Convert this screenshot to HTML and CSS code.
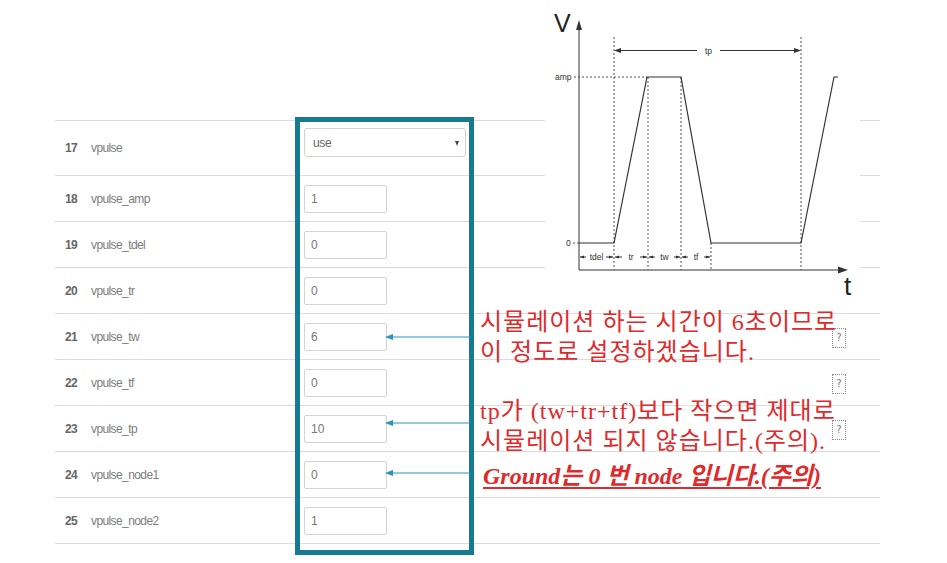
FILE: index.html
```html
<!DOCTYPE html>
<html lang="ko">
<head>
<meta charset="utf-8">
<title>vpulse settings</title>
<link rel="stylesheet" href="styles.css">
</head>
<body>
<div class="page">
  <div class="table">
    <div class="row row-first">
      <span class="num">17</span><span class="label">vpulse</span>
      <div class="val val-top"><div class="select">use<span class="caret"></span></div></div>
      <div class="help"></div>
    </div>
    <div class="row">
      <span class="num">18</span><span class="label">vpulse_amp</span>
      <div class="val"><div class="input">1</div></div>
      <div class="help"></div>
    </div>
    <div class="row">
      <span class="num">19</span><span class="label">vpulse_tdel</span>
      <div class="val"><div class="input">0</div></div>
      <div class="help"></div>
    </div>
    <div class="row">
      <span class="num">20</span><span class="label">vpulse_tr</span>
      <div class="val"><div class="input">0</div></div>
      <div class="help"></div>
    </div>
    <div class="row">
      <span class="num">21</span><span class="label">vpulse_tw</span>
      <div class="val"><div class="input">6</div></div>
      <div class="help"><span class="q">?</span></div>
    </div>
    <div class="row">
      <span class="num">22</span><span class="label">vpulse_tf</span>
      <div class="val"><div class="input">0</div></div>
      <div class="help"><span class="q">?</span></div>
    </div>
    <div class="row">
      <span class="num">23</span><span class="label">vpulse_tp</span>
      <div class="val"><div class="input">10</div></div>
      <div class="help"><span class="q">?</span></div>
    </div>
    <div class="row">
      <span class="num">24</span><span class="label">vpulse_node1</span>
      <div class="val"><div class="input">0</div></div>
      <div class="help"></div>
    </div>
    <div class="row row-last">
      <span class="num">25</span><span class="label">vpulse_node2</span>
      <div class="val"><div class="input">1</div></div>
      <div class="help"></div>
    </div>
  </div>

  <div class="highlight"></div>

  <svg class="diagram" viewBox="545 0 315 304" width="315" height="304">
    <rect x="545" y="0" width="315" height="304" fill="#fff"/>
    <text x="554" y="32" class="big">V</text>
    <line x1="579" y1="28" x2="579" y2="270" class="axis"/>
    <polygon points="579,20 576,30 582,30" fill="#333"/>
    <line x1="579" y1="270" x2="840" y2="270" class="axis"/>
    <polygon points="848,270 838,266.5 838,273.5" fill="#333"/>
    <text x="844" y="295" class="big t">t</text>

    <g class="dots">
      <line x1="574" y1="77" x2="647" y2="77"/>
      <line x1="573" y1="243" x2="579" y2="243"/>
      <line x1="614" y1="37" x2="614" y2="270"/>
      <line x1="648" y1="77" x2="648" y2="270"/>
      <line x1="681" y1="77" x2="681" y2="270"/>
      <line x1="711" y1="243" x2="711" y2="270"/>
      <line x1="801" y1="37" x2="801" y2="270"/>
    </g>
    <polyline points="579,243 614,243 647,77 681,77 711,243 801,243 834,77 838,77" class="pulse"/>

    <text x="555" y="80" class="small">amp</text>
    <text x="566" y="246" class="small">0</text>

    <line x1="617" y1="50.5" x2="697" y2="50.5" class="axis"/>
    <line x1="720" y1="50.5" x2="798" y2="50.5" class="axis"/>
    <polygon points="614,50.5 621,48 621,53" fill="#333"/>
    <polygon points="801,50.5 794,48 794,53" fill="#333"/>
    <text x="708.5" y="54" class="small mid">tp</text>

    <g class="seg">
      <line x1="580" y1="257" x2="586" y2="257"/>
      <line x1="606" y1="257" x2="613" y2="257"/>
      <line x1="615" y1="257" x2="622" y2="257"/>
      <line x1="640" y1="257" x2="647" y2="257"/>
      <line x1="649" y1="257" x2="655" y2="257"/>
      <line x1="674" y1="257" x2="680" y2="257"/>
      <line x1="682" y1="257" x2="688" y2="257"/>
      <line x1="704" y1="257" x2="710" y2="257"/>
    </g>
    <g fill="#333">
      <polygon points="580,257 584,255.5 584,258.5"/>
      <polygon points="613,257 609,255.5 609,258.5"/>
      <polygon points="615,257 619,255.5 619,258.5"/>
      <polygon points="647,257 643,255.5 643,258.5"/>
      <polygon points="649,257 653,255.5 653,258.5"/>
      <polygon points="680,257 676,255.5 676,258.5"/>
      <polygon points="682,257 686,255.5 686,258.5"/>
      <polygon points="710,257 706,255.5 706,258.5"/>
    </g>
    <text x="596.5" y="260" class="small mid">tdel</text>
    <text x="631" y="260" class="small mid">tr</text>
    <text x="664.5" y="260" class="small mid">tw</text>
    <text x="696" y="260" class="small mid">tf</text>
  </svg>

  <svg class="arrows" viewBox="380 320 95 170" width="95" height="170">
    <g class="arrow-line">
      <line x1="392" y1="337" x2="471" y2="337"/>
      <line x1="392" y1="423" x2="471" y2="423"/>
      <line x1="392" y1="473" x2="471" y2="473"/>
    </g>
    <g fill="#2795b5">
      <polygon points="385,337 393,334 393,340"/>
      <polygon points="385,423 393,420 393,426"/>
      <polygon points="385,473 393,470 393,476"/>
    </g>
  </svg>

  <div class="note note-1">
    <p>시뮬레이션 하는 시간이 6초이므로</p>
    <p>이 정도로 설정하겠습니다.</p>
  </div>
  <div class="note note-2">
    <p>tp가 (tw+tr+tf)보다 작으면 제대로</p>
    <p>시뮬레이션 되지 않습니다.(주의).</p>
  </div>
  <div class="note note-3">
    <p>Ground는 0 번 node 입니다.(주의)</p>
  </div>
</div>
</body>
</html>
```

FILE: styles.css
```css
* { box-sizing: border-box; }

html, body {
  margin: 0;
  padding: 0;
  background: #fff;
}

.page {
  position: relative;
  width: 947px;
  height: 563px;
  overflow: hidden;
  padding: 120px 0 0 55px;
  font-family: "Liberation Sans", Arial, sans-serif;
}

.table {
  width: 825px;
  display: flex;
  flex-direction: column;
}

.row {
  display: grid;
  grid-template-columns: 36px 213px 528px 48px;
  align-items: center;
  height: 46px;
  border-top: 1px solid #dcdcdc;
}

.row-first {
  height: 55px;
}

.row-last {
  border-bottom: 1px solid #dcdcdc;
  height: 47px;
}

.num {
  padding-left: 10px;
  font-size: 12px;
  font-weight: bold;
  color: #666;
  letter-spacing: -0.6px;
}

.label {
  font-size: 12px;
  color: #7d7d7d;
  letter-spacing: -0.6px;
}

.val {
  display: flex;
  align-items: center;
}

.val-top {
  align-self: start;
  padding-top: 7px;
}

.select {
  position: relative;
  width: 162px;
  height: 29px;
  border: 1px solid #d2d2d2;
  border-radius: 3px;
  padding-left: 8px;
  display: flex;
  align-items: center;
  font-size: 12px;
  color: #666;
  letter-spacing: -0.3px;
}

.caret {
  position: absolute;
  right: 6px;
  top: 12px;
  width: 0;
  height: 0;
  border-left: 2.5px solid transparent;
  border-right: 2.5px solid transparent;
  border-top: 5px solid #444;
}

.input {
  width: 83px;
  height: 28px;
  border: 1px solid #d4d4d4;
  border-radius: 2px;
  padding-left: 6px;
  display: flex;
  align-items: center;
  font-size: 12px;
  color: #777;
}

.help {
  display: flex;
  align-items: center;
  padding-top: 2px;
}

.q {
  width: 14px;
  height: 20px;
  border: 1px dotted #8a8a8a;
  display: flex;
  align-items: center;
  justify-content: center;
  font-size: 10px;
  color: #777;
  font-family: "DejaVu Sans", sans-serif;
}

.highlight {
  position: absolute;
  left: 295px;
  top: 117px;
  width: 179px;
  height: 438px;
  border: 5px solid #167a90;
}

.diagram {
  position: absolute;
  left: 545px;
  top: 0;
  display: block;
}

.diagram .axis {
  stroke: #333;
  stroke-width: 1;
}

.diagram .pulse {
  fill: none;
  stroke: #333;
  stroke-width: 1.2;
}

.diagram .dots line {
  stroke: #555;
  stroke-width: 1;
  stroke-dasharray: 2 2;
}

.diagram .seg line {
  stroke: #333;
  stroke-width: 1;
}

.diagram .big {
  font-family: "Liberation Sans", Arial, sans-serif;
  font-size: 25px;
  fill: #222;
}

.diagram .t {
  font-size: 26px;
}

.diagram .small {
  font-family: "Liberation Sans", Arial, sans-serif;
  font-size: 8.5px;
  fill: #333;
}

.diagram .mid {
  text-anchor: middle;
}

.arrows {
  position: absolute;
  left: 380px;
  top: 320px;
  display: block;
}

.arrows .arrow-line line {
  stroke: #2795b5;
  stroke-width: 1.2;
}

.note {
  position: absolute;
  left: 480px;
  color: #de2a2c;
  font-family: "Liberation Serif", "Noto Sans CJK KR", serif;
  font-size: 24px;
  line-height: 30px;
  letter-spacing: 1px;
  white-space: nowrap;
}

.note p {
  margin: 0;
}

.note-1 { top: 307px; }
.note-2 { top: 396px; }

.note-3 {
  top: 461px;
  left: 483px;
  font-weight: bold;
  font-style: italic;
  text-decoration: underline;
  text-underline-offset: 3px;
  letter-spacing: 0;
}
```
